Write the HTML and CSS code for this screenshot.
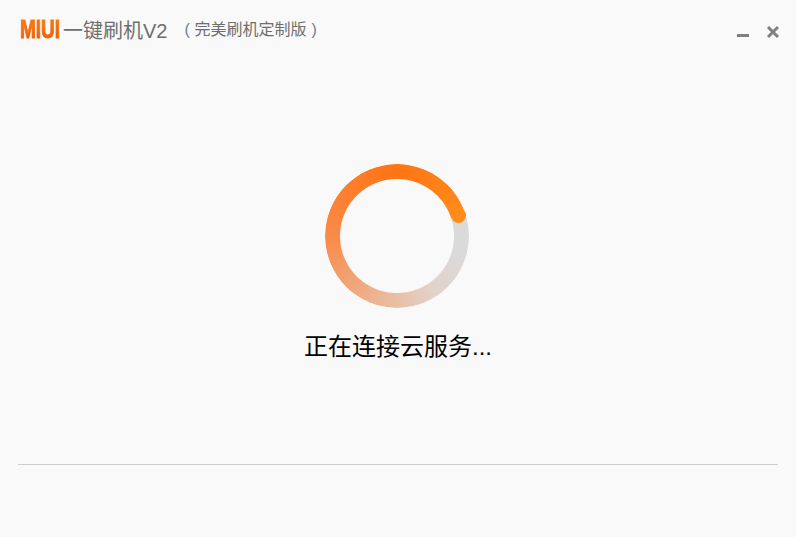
FILE: index.html
```html
<!DOCTYPE html>
<html lang="en">
<head>
    <meta charset="UTF-8">
    <meta name="viewport" content="width=device-width, initial-scale=1.0">
    <title>MIUI</title>
    <link rel="stylesheet" href="styles.css">
</head>
<body>
    <div class="window">
        <!-- Title bar -->
        <div class="titlebar">
            <div class="brand">
                <span class="logo">MIUI</span>
                <span class="app-name">一键刷机V2</span>
                <span class="app-note"><span class="paren">(</span>完美刷机定制版<span class="paren paren-end">)</span></span>
            </div>
            <div class="window-btns">
                <svg class="btn-min" width="14" height="14" viewBox="0 0 14 14">
                    <rect x="1" y="9" width="12" height="3" fill="#808080"/>
                </svg>
                <svg class="btn-close" width="14" height="14" viewBox="0 0 14 14">
                    <path d="M2 2 L12 12 M12 2 L2 12" stroke="#808080" stroke-width="3" fill="none"/>
                </svg>
            </div>
        </div>

        <!-- Progress -->
        <div class="status-section">
            <div class="ring">
                <div class="ring-track"></div>
                <div class="ring-cap"></div>
            </div>
            <div class="status-text">正在连接云服务...</div>
        </div>

        <!-- Bottom -->
        <div class="footer">
            <div class="divider"></div>
        </div>
    </div>
</body>
</html>
```

FILE: styles.css
```css
* {
    margin: 0;
    padding: 0;
    box-sizing: border-box;
}

body {
    font-family: "Liberation Sans", "Noto Sans CJK SC", sans-serif;
    background-color: #f9f9f9;
    overflow: hidden;
}

.window {
    display: flex;
    flex-direction: column;
    width: 796px;
    height: 537px;
}

.titlebar {
    display: flex;
    justify-content: space-between;
    align-items: flex-start;
    height: 164px;
    padding: 16px 16px 0 20px;
}

.brand {
    display: flex;
    align-items: center;
    height: 26px;
}

.logo {
    flex: none;
    width: 54px;
    margin-right: -14px;
    font-size: 25px;
    font-weight: bold;
    line-height: 26px;
    white-space: nowrap;
    transform: scaleX(0.76);
    transform-origin: left center;
    -webkit-text-stroke: 1px transparent;
    background: linear-gradient(#fb7d0e, #ef5a06);
    -webkit-background-clip: text;
    background-clip: text;
    color: transparent;
}

.app-name {
    margin-left: 3px;
    font-size: 20px;
    color: #6e6e6e;
    white-space: nowrap;
}

.app-note {
    margin-left: 17px;
    padding-top: 2px;
    font-size: 16px;
    line-height: 26px;
    color: #6e6e6e;
    white-space: nowrap;
}

.paren {
    display: inline-block;
    width: 10px;
    color: #6f7f94;
}

.paren-end {
    margin-left: 5px;
}

.window-btns {
    display: flex;
    gap: 16px;
    margin-top: 9px;
}

.status-section {
    display: flex;
    flex-direction: column;
    align-items: center;
    height: 300px;
}

.ring {
    position: relative;
    width: 144px;
    height: 144px;
    margin-left: -2px;
}

.ring-track {
    width: 100%;
    height: 100%;
    border-radius: 50%;
    background: conic-gradient(from 72deg,
        #dadada 0deg,
        #dadada 35deg,
        #e2d2c8 75deg,
        #e9bfa6 108deg,
        #f2a070 160deg,
        #f98a48 198deg,
        #ff7c28 250deg,
        #ff7414 288deg,
        #ff8c1a 360deg);
    -webkit-mask: radial-gradient(circle, transparent 56.5px, #000 57.5px);
    mask: radial-gradient(circle, transparent 56.5px, #000 57.5px);
}

.ring-cap {
    position: absolute;
    top: 44px;
    left: 126px;
    width: 15px;
    height: 15px;
    border-radius: 50%;
    background-color: #ff8c1a;
}

.status-text {
    margin-top: 21px;
    font-size: 24px;
    line-height: 36px;
    color: #000;
    white-space: nowrap;
}

.footer {
    padding: 0 18px;
}

.divider {
    height: 1px;
    background-color: #ccc;
}
```
